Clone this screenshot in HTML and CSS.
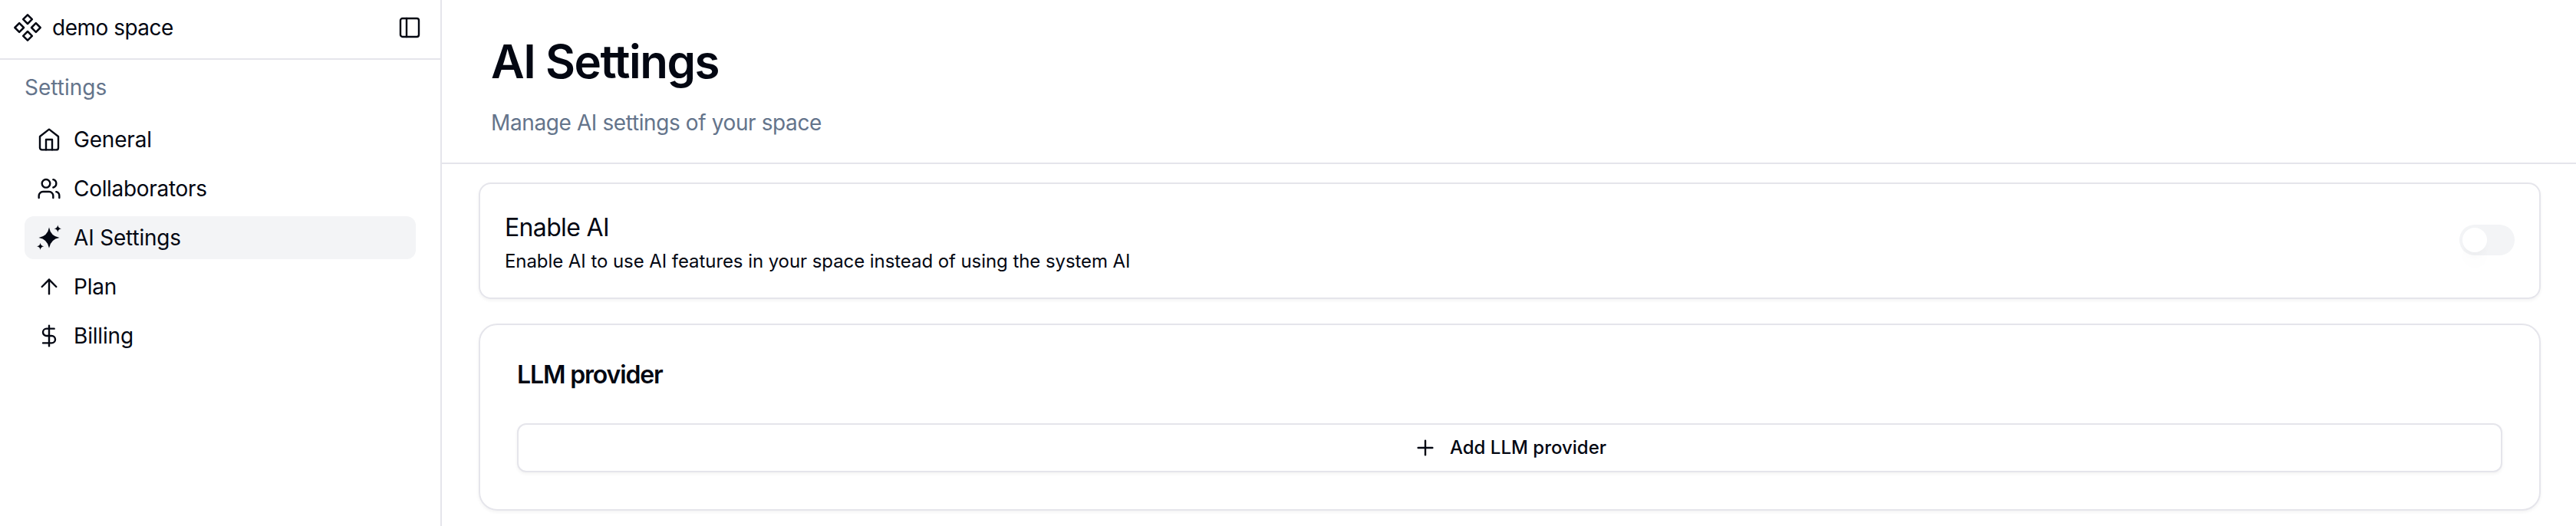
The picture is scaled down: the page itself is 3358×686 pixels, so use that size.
FILE: index.html
```html
<!DOCTYPE html>
<html lang="en">
<head>
<meta charset="utf-8">
<title>AI Settings</title>
<link rel="stylesheet" href="styles.css">
</head>
<body>
<div class="app">
  <aside class="sidebar">
    <header class="sidebar-header">
      <svg class="icon logo" viewBox="0 0 24 24"><path d="M5.5 8.5 9 12l-3.5 3.5L2 12l3.5-3.5Z"/><path d="m12 2 3.5 3.5L12 9 8.5 5.5 12 2Z"/><path d="M18.5 8.5 22 12l-3.5 3.5L15 12l3.5-3.5Z"/><path d="m12 15 3.5 3.5L12 22l-3.5-3.5L12 15Z"/></svg>
      <span class="space-name">demo space</span>
      <svg class="icon" viewBox="0 0 24 24"><rect x="3" y="3" width="18" height="18" rx="2"/><path d="M9 3v18"/></svg>
    </header>
    <nav class="nav">
      <h2 class="nav-label">Settings</h2>
      <a class="nav-item"><svg class="icon" viewBox="0 0 24 24"><path d="m3 9 9-7 9 7v11a2 2 0 0 1-2 2H5a2 2 0 0 1-2-2z"/><path d="M9 22V12h6v10"/></svg><span>General</span></a>
      <a class="nav-item"><svg class="icon" viewBox="0 0 24 24"><path d="M16 21v-2a4 4 0 0 0-4-4H6a4 4 0 0 0-4 4v2"/><circle cx="9" cy="7" r="4"/><path d="M22 21v-2a4 4 0 0 0-3-3.870"/><path d="M16 3.130a4 4 0 0 1 0 7.750"/></svg><span class="wide-label">Collaborators</span></a>
      <a class="nav-item active"><svg class="icon solid" viewBox="0 0 32 32"><path d="M16 2.500Q18 14 29.500 16Q18 18 16 29.500Q14 18 2.500 16Q14 14 16 2.500Z"/><path d="M27.300 -0.400Q27.800 3.800 32 4.300Q27.800 4.800 27.300 9Q26.800 4.800 22.600 4.300Q26.800 3.800 27.300 -0.400Z"/><path d="M4.600 22.700Q5.100 26.800 9.200 27.300Q5.100 27.800 4.600 31.900Q4.100 27.800 0 27.300Q4.100 26.800 4.600 22.700Z"/></svg><span>AI Settings</span></a>
      <a class="nav-item"><svg class="icon" viewBox="0 0 24 24"><path d="m5 12 7-7 7 7"/><path d="M12 19V5"/></svg><span>Plan</span></a>
      <a class="nav-item"><svg class="icon" viewBox="0 0 24 24"><path d="M12 2v20"/><path d="M17 5H9.500a3.500 3.500 0 0 0 0 7h5a3.500 3.500 0 0 1 0 7H6"/></svg><span>Billing</span></a>
    </nav>
  </aside>
  <main class="main">
    <header class="page-header">
      <h1 class="page-title">AI Settings</h1>
      <p class="page-subtitle">Manage AI settings of your space</p>
    </header>
    <div class="content">
      <section class="card toggle-card">
        <div class="toggle-text">
          <h3 class="toggle-title">Enable AI</h3>
          <p class="toggle-desc">Enable AI to use AI features in your space instead of using the system AI</p>
        </div>
        <span class="switch"><span class="knob"></span></span>
      </section>
      <section class="card provider-card">
        <h3 class="card-title">LLM provider</h3>
        <button class="add-button"><svg class="icon" viewBox="0 0 24 24"><path d="M5 12h14"/><path d="M12 5v14"/></svg><span>Add LLM provider</span></button>
      </section>
    </div>
  </main>
</div>
</body>
</html>
```
FILE: styles.css
```css
* { box-sizing: border-box; margin: 0; padding: 0; }
body { font-family: Inter, "Liberation Sans", sans-serif; color: #030712; background: #fff; font-size: 28px; line-height: 40px; }
h1, h2, h3 { font-weight: 400; font-size: inherit; }
.app { display: flex; height: 686px; overflow: hidden; }
.icon { width: 32px; height: 32px; flex: none; fill: none; stroke: currentColor; stroke-width: 1.8; stroke-linecap: round; stroke-linejoin: round; }
.icon.solid { fill: currentColor; stroke: none; overflow: visible; }
.icon.logo { width: 40px; height: 40px; stroke-width: 1.5; }
.sidebar { width: 576px; flex: none; border-right: 2px solid #e5e5eb; }
.sidebar-header { display: flex; align-items: center; height: 78px; padding: 0 24px 4px 16px; border-bottom: 2px solid #e5e5eb; }
.space-name { flex: 1; margin-left: 12px; letter-spacing: -0.5px; }
.nav { display: flex; flex-direction: column; gap: 8px; padding: 16px 32px; }
.nav-label { color: #64748b; height: 52px; }
.nav-item { display: flex; align-items: center; gap: 16px; height: 56px; padding: 0 16px; border-radius: 12px; letter-spacing: -0.18px; }
.wide-label { letter-spacing: -0.3px; }
.nav-item.active { background: #f3f4f6; }
.main { flex: 1; }
.page-header { height: 214px; padding: 44px 64px 0; border-bottom: 2px solid #e5e5eb; }
.page-title { font-size: 60px; line-height: 72px; font-weight: 600; letter-spacing: -1.48px; }
.page-subtitle { margin-top: 24px; color: #64748b; letter-spacing: -0.39px; }
.content { display: flex; flex-direction: column; gap: 32px; padding: 24px 46px 0 48px; }
.card { border: 2px solid #e5e5eb; box-shadow: 0 2px 4px rgba(0, 0, 0, 0.05); }
.toggle-card { display: flex; align-items: center; justify-content: space-between; height: 152px; padding: 0 32px 2px; border-radius: 16px; }
.toggle-text { padding-top: 8px; }
.toggle-title { font-size: 32px; line-height: 48px; letter-spacing: -0.65px; }
.toggle-desc { font-size: 24px; line-height: 40px; letter-spacing: -0.07px; }
.switch { width: 72px; height: 40px; padding: 4px; border-radius: 20px; background: #f3f4f6; }
.knob { display: block; width: 32px; height: 32px; border-radius: 50%; background: #fff; box-shadow: 0 20px 30px -6px rgba(0, 0, 0, 0.03), 0 8px 12px -4px rgba(0, 0, 0, 0.03); }
.provider-card { height: 244px; padding: 49px 48px 48px; border-radius: 24px; }
.card-title { font-size: 32px; line-height: 32px; font-weight: 600; letter-spacing: -1.15px; }
.add-button { display: flex; align-items: center; justify-content: center; gap: 16px; width: 100%; height: 64px; margin-top: 47px; border: 2px solid #e5e5eb; border-radius: 12px; background: #fff; color: inherit; font: 500 24px/32px Inter, "Liberation Sans", sans-serif; box-shadow: 0 2px 4px rgba(0, 0, 0, 0.05); }
```
